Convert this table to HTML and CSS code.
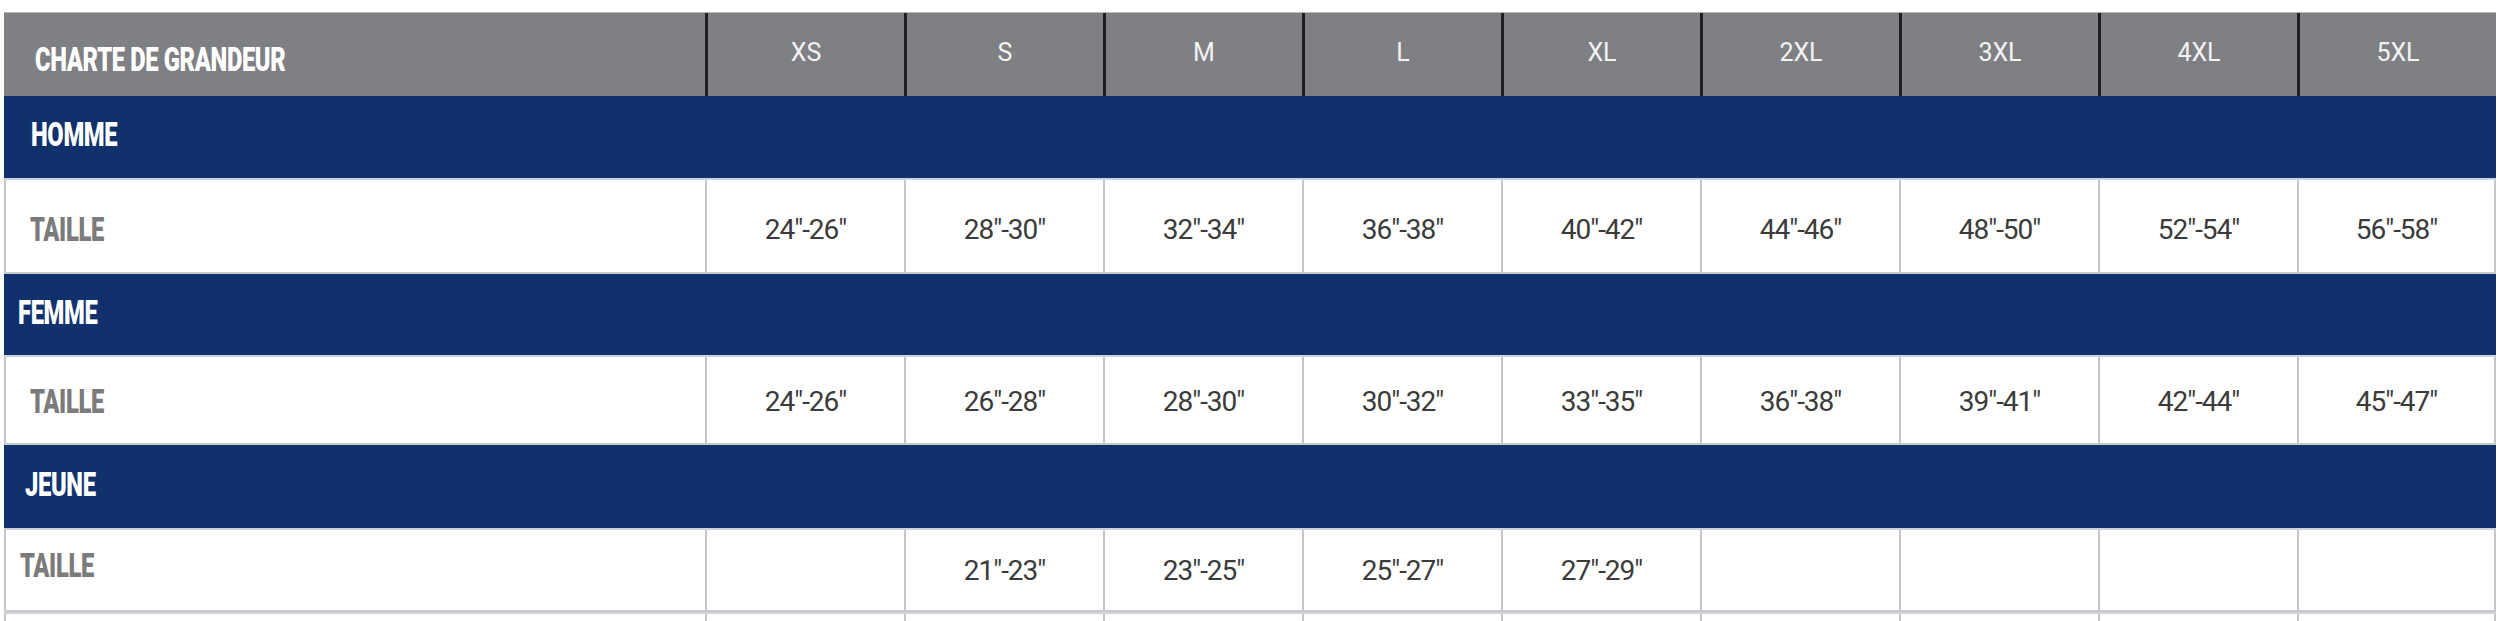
FILE: index.html
```html
<!DOCTYPE html>
<html lang="fr">
<head>
<meta charset="utf-8">
<title>Charte de grandeur</title>
<link rel="stylesheet" href="styles.css">
</head>
<body>
<div class="chart">
  <div class="row head">
    <div class="cell label"><span class="cond">CHARTE DE GRANDEUR</span></div>
    <div class="cell">XS</div>
    <div class="cell">S</div>
    <div class="cell">M</div>
    <div class="cell">L</div>
    <div class="cell">XL</div>
    <div class="cell">2XL</div>
    <div class="cell">3XL</div>
    <div class="cell">4XL</div>
    <div class="cell">5XL</div>
  </div>

  <div class="group g-homme"><span class="cond">HOMME</span></div>
  <div class="row body r1">
    <div class="cell label"><span class="cond">TAILLE</span></div>
    <div class="cell">24"-26"</div>
    <div class="cell">28"-30"</div>
    <div class="cell">32"-34"</div>
    <div class="cell">36"-38"</div>
    <div class="cell">40"-42"</div>
    <div class="cell">44"-46"</div>
    <div class="cell">48"-50"</div>
    <div class="cell">52"-54"</div>
    <div class="cell">56"-58"</div>
  </div>

  <div class="group g-femme"><span class="cond">FEMME</span></div>
  <div class="row body r2">
    <div class="cell label"><span class="cond">TAILLE</span></div>
    <div class="cell">24"-26"</div>
    <div class="cell">26"-28"</div>
    <div class="cell">28"-30"</div>
    <div class="cell">30"-32"</div>
    <div class="cell">33"-35"</div>
    <div class="cell">36"-38"</div>
    <div class="cell">39"-41"</div>
    <div class="cell">42"-44"</div>
    <div class="cell">45"-47"</div>
  </div>

  <div class="group g-jeune"><span class="cond">JEUNE</span></div>
  <div class="row body r3">
    <div class="cell label"><span class="cond">TAILLE</span></div>
    <div class="cell"></div>
    <div class="cell">21"-23"</div>
    <div class="cell">23"-25"</div>
    <div class="cell">25"-27"</div>
    <div class="cell">27"-29"</div>
    <div class="cell"></div>
    <div class="cell"></div>
    <div class="cell"></div>
    <div class="cell"></div>
  </div>
  <div class="row body r4">
    <div class="cell label"></div>
    <div class="cell"></div>
    <div class="cell"></div>
    <div class="cell"></div>
    <div class="cell"></div>
    <div class="cell"></div>
    <div class="cell"></div>
    <div class="cell"></div>
    <div class="cell"></div>
    <div class="cell"></div>
  </div>
</div>
</body>
</html>
```

FILE: styles.css
```css
html, body {
  margin: 0;
  padding: 0;
  background: #ffffff;
}

.chart {
  padding: 12px 0 0 4px;
  width: 2492px;
  font-family: Roboto, "Liberation Sans", sans-serif;
}

.row {
  display: grid;
  grid-template-columns: 701px repeat(9, 199px);
}

.cell {
  display: flex;
  align-items: center;
  justify-content: center;
  font-size: 28px;
  letter-spacing: -1px;
}

.cell.label {
  justify-content: flex-start;
}

.cond {
  display: inline-block;
  font-family: Roboto, "Liberation Sans", sans-serif;
  font-weight: 900;
  font-size: 33px;
  letter-spacing: -0.5px;
  transform: scaleX(0.72);
  transform-origin: left center;
  white-space: nowrap;
}

/* header */
.head {
  height: 83px;
  background: #7f8083;
  border-top: 1px solid #b9b9b9;
  color: #f3f3f3;
}
.head .cell {
  border-left: 3px solid #1f1f1f;
  padding-bottom: 4px;
  font-size: 25px;
  letter-spacing: 0;
}
.head .cell.label {
  border-left: none;
  padding: 10px 0 0 31px;
  color: #ffffff;
}

/* group bars */
.group {
  background: #10316b;
  color: #ffffff;
  display: flex;
  align-items: center;
  box-sizing: border-box;
}
.g-homme {
  height: 82px;
  padding-left: 27px;
  padding-bottom: 5px;
}
.g-femme {
  height: 81px;
  padding-left: 14px;
  padding-bottom: 4px;
}
.g-jeune {
  height: 83px;
  padding-left: 21px;
  padding-bottom: 5px;
}

/* body rows */
.body {
  background: #ffffff;
  color: #3b3b3b;
  border-top: 2px solid #cdd3dc;
  border-bottom: 2px solid #c9c9c9;
  box-sizing: border-box;
}
.body .cell {
  border-left: 2px solid #c6c6c6;
}
.body .cell:last-child {
  border-right: 2px solid #c6c6c6;
}
.body .cell.label {
  color: #7b7b7b;
}
.r1 { height: 96px; }
.r1 .cell { padding-top: 7px; }
.r1 .cell.label { padding-left: 24px; }

.r2 { height: 90px; }
.r2 .cell { padding-top: 2px; }
.r2 .cell.label { padding-left: 24px; }

.r3 { height: 84px; }
.r3 .cell.label { padding: 0 0 10px 14px; }

.r4 {
  height: 40px;
  border-bottom: none;
}
```
